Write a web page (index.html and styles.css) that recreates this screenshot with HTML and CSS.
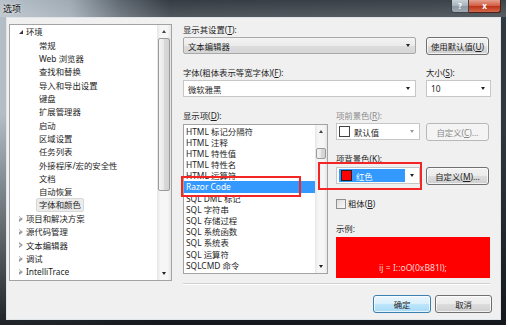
FILE: index.html
```html
<!DOCTYPE html>
<html lang="zh-CN">
<head>
    <meta charset="UTF-8">
    <link rel="stylesheet" href="styles.css">
    <title>选项</title>
</head>
<body>
<div class="window">
    <div class="titlebar">
        <span class="title">选项</span>
        <div class="caption-btns">
            <span class="cap help">?</span>
            <span class="cap close">x</span>
        </div>
    </div>

    <div class="client">
        <div class="tree">
            <ul class="tree-items">
                <li class="lvl0"><i class="caret open"></i>环境</li>
                <li class="lvl1">常规</li>
                <li class="lvl1">Web 浏览器</li>
                <li class="lvl1">查找和替换</li>
                <li class="lvl1">导入和导出设置</li>
                <li class="lvl1">键盘</li>
                <li class="lvl1">扩展管理器</li>
                <li class="lvl1">启动</li>
                <li class="lvl1">区域设置</li>
                <li class="lvl1">任务列表</li>
                <li class="lvl1">外接程序/宏的安全性</li>
                <li class="lvl1">文档</li>
                <li class="lvl1">自动恢复</li>
                <li class="lvl1 sel"><span>字体和颜色</span></li>
                <li class="lvl0"><i class="caret"></i>项目和解决方案</li>
                <li class="lvl0"><i class="caret"></i>源代码管理</li>
                <li class="lvl0"><i class="caret"></i>文本编辑器</li>
                <li class="lvl0"><i class="caret"></i>调试</li>
                <li class="lvl0"><i class="caret"></i>IntelliTrace</li>
            </ul>
            <div class="vscroll">
                <span class="arrow"><i class="tri up"></i></span>
                <span class="track"><span class="thumb tree-thumb"></span></span>
                <span class="arrow"><i class="tri down"></i></span>
            </div>
        </div>

        <div class="settings">
            <div class="label">显示其设置(<u>T</u>):</div>
            <div class="row">
                <div class="combo styled w-wide"><span class="val">文本编辑器</span><span class="drop"><i class="tri down"></i></span></div>
                <div class="btn ml10">使用默认值(<u>U</u>)</div>
            </div>

            <div class="row mt12">
                <div class="label w-font">字体(粗体表示等宽字体)(<u>F</u>):</div>
                <div class="label">大小(<u>S</u>):</div>
            </div>
            <div class="row">
                <div class="combo w-wide"><span class="val">微软雅黑</span><span class="drop"><i class="tri down"></i></span></div>
                <div class="combo w-size ml10"><span class="val">10</span><span class="drop"><i class="tri down"></i></span></div>
            </div>

            <div class="row mt13">
                <div class="items-col">
                    <div class="label">显示项(<u>D</u>):</div>
                    <div class="listbox">
                        <ul class="list-items">
                            <li>HTML 标记分隔符</li>
                            <li>HTML 注释</li>
                            <li>HTML 特性值</li>
                            <li>HTML 特性名</li>
                            <li>HTML 运算符</li>
                            <li class="sel">Razor Code</li>
                            <li>SQL DML 标记</li>
                            <li>SQL 字符串</li>
                            <li>SQL 存储过程</li>
                            <li>SQL 系统函数</li>
                            <li>SQL 系统表</li>
                            <li>SQL 运算符</li>
                            <li>SQLCMD 命令</li>
                        </ul>
                        <div class="vscroll small">
                            <span class="arrow"><i class="tri up"></i></span>
                            <span class="track"><span class="thumb list-thumb"></span></span>
                            <span class="arrow"><i class="tri down"></i></span>
                        </div>
                    </div>
                </div>

                <div class="color-col">
                    <div class="label dim">项前景色(<u>R</u>):</div>
                    <div class="row">
                        <div class="combo color disabled"><span class="swatch white"></span><span class="val">默认值</span><span class="drop"><i class="tri down"></i></span></div>
                        <div class="btn disabled ml6">自定义(<u>C</u>)...</div>
                    </div>
                    <div class="label mt-bg">项背景色(<u>K</u>):</div>
                    <div class="row">
                        <div class="combo color"><span class="picked"><span class="swatch red"></span><span class="val">红色</span></span><span class="drop"><i class="tri down"></i></span></div>
                        <div class="btn ml6">自定义(<u>M</u>)...</div>
                    </div>
                    <div class="check-row">
                        <span class="checkbox"></span>粗体(<u>B</u>)
                    </div>
                    <div class="label mt-sample">示例:</div>
                    <div class="sample">ij = I::oO(0xB81l);</div>
                </div>
            </div>

            <div class="separator"></div>

            <div class="row buttons">
                <div class="btn default">确定</div>
                <div class="btn ml4 w-cancel">取消</div>
            </div>
        </div>
    </div>

    <div class="mark mark-item"></div>
    <div class="mark mark-color"></div>
</div>
</body>
</html>
```

FILE: styles.css
```css
* {
    box-sizing: border-box;
}
body {
    margin: 0;
    background: #fff;
    font-family: "Noto Sans", "Noto Sans CJK SC", sans-serif;
    font-size: 8.4px;
    color: #1e1e1e;
}
ul {
    list-style: none;
    margin: 0;
    padding: 0;
}
u {
    text-decoration: underline;
}

/* window frame */
.window {
    position: relative;
    width: 506px;
    height: 325px;
    display: flex;
    flex-direction: column;
    background:
        linear-gradient(to bottom, rgba(20,25,30,0) 0, rgba(20,25,30,0) 35%, rgba(18,22,26,.92) 100%),
        linear-gradient(to right, #b4bec6 0, #9aa6b0 70px, #56606a 120px, #2a3239 170px, #323a41 100%);
}
.titlebar {
    height: 17px;
    display: flex;
    align-items: flex-start;
    background: linear-gradient(to bottom, rgba(255,255,255,.05), rgba(255,255,255,.18));
}
.title {
    padding: 3px 0 0 3px;
    font-size: 9px;
    line-height: 11px;
    color: #111;
    text-shadow: 0 0 3px rgba(255,255,255,.9);
}
.caption-btns {
    margin-left: auto;
    margin-right: 5px;
    display: flex;
}
.cap {
    height: 13px;
    display: flex;
    align-items: center;
    justify-content: center;
    color: #fff;
    font-size: 8px;
    font-weight: bold;
    line-height: 1;
}
.help {
    width: 18px;
    border: 1px solid #3c444c;
    border-top: 0;
    border-radius: 0 0 0 3px;
    background: linear-gradient(to bottom, #c9d1d8, #a5b0ba 50%, #8c98a3 50%, #9ea9b3);
}
.close {
    width: 32px;
    border: 1px solid #4b2019;
    border-top: 0;
    border-left: 0;
    border-radius: 0 0 3px 0;
    background: linear-gradient(to bottom, #e6a08f, #cf5a3f 50%, #bb3015 50%, #d2684c);
}

.client {
    flex: 1;
    margin: 0 5px 5px 6px;
    padding: 6px 8px 0 2px;
    background: #f0f0f0;
    border: 1px solid #dfe4e8;
    display: flex;
    align-items: flex-start;
}

/* tree */
.tree {
    width: 163px;
    height: 257px;
    border: 1px solid #a3a3a3;
    background: #fff;
    display: flex;
}
.tree-items {
    flex: 1;
    padding-top: 0.3px;
}
.tree-items li {
    height: 13.35px;
    line-height: 13.35px;
    white-space: nowrap;
    display: flex;
    align-items: center;
}
.lvl0 {
    padding-left: 8.5px;
}
.lvl1 {
    padding-left: 29px;
}
.tree-items .sel span {
    margin-left: -3px;
    padding: 0 2px;
    line-height: 12px;
    background: #ececec;
    border: 1px solid #d8d8d8;
    border-radius: 2px;
}
.caret {
    width: 4px;
    height: 6px;
    margin-right: 3.5px;
    position: relative;
}
.caret::before {
    content: "";
    position: absolute;
    left: 0;
    top: 0;
    border-top: 3px solid transparent;
    border-bottom: 3px solid transparent;
    border-left: 4px solid #9b9b9b;
}
.caret::after {
    content: "";
    position: absolute;
    left: 0.7px;
    top: 1.2px;
    border-top: 1.8px solid transparent;
    border-bottom: 1.8px solid transparent;
    border-left: 2.4px solid #fff;
}
.caret.open::before {
    top: 1px;
    border: 0;
    border-bottom: 4px solid #333;
    border-left: 4px solid transparent;
}
.caret.open::after {
    display: none;
}

/* scrollbars */
.vscroll {
    width: 14px;
    display: flex;
    flex-direction: column;
    background: linear-gradient(to right, #e6e6e6, #f6f6f6 25%, #f6f6f6 75%, #e6e6e6);
}
.vscroll.small {
    width: 12px;
}
.arrow {
    height: 13px;
    display: flex;
    align-items: center;
    justify-content: center;
}
.track {
    flex: 1;
    display: flex;
    flex-direction: column;
}
.thumb {
    margin: 0 1px;
    border: 1px solid #9a9a9a;
    border-radius: 2px;
    background: linear-gradient(to right, #f4f4f4, #e8e8e8 50%, #d9d9d9 50%, #d2d2d2);
}
.tree-thumb {
    height: 153px;
}
.list-thumb {
    margin-top: 10px;
    height: 11px;
}
.tri {
    width: 0;
    height: 0;
    border-left: 2.5px solid transparent;
    border-right: 2.5px solid transparent;
}
.tri.up {
    border-bottom: 3px solid #444;
}
.tri.down {
    border-top: 3px solid #222;
}

/* right side */
.settings {
    width: 309px;
    margin-left: 11px;
}
.label {
    height: 11px;
    line-height: 11px;
    margin-bottom: 2px;
    white-space: nowrap;
}
.label.dim {
    color: #8b8b8b;
}
.row {
    display: flex;
    align-items: flex-start;
}
.mt12 {
    margin-top: 12px;
}
.mt13 {
    margin-top: 13px;
}
.ml4 {
    margin-left: 4px;
}
.ml6 {
    margin-left: 6px;
}
.ml10 {
    margin-left: 10px;
}
.w-font {
    width: 243px;
}

.combo {
    height: 17px;
    border: 1px solid #c7c7c7;
    background: #fff;
    display: flex;
    align-items: center;
    padding-left: 4px;
    white-space: nowrap;
}
.combo .val {
    flex: 1;
}
.combo .drop {
    width: 14px;
    display: flex;
    justify-content: center;
}
.combo.styled {
    border: 1px solid #a9a9a9;
    border-radius: 2px;
    background: linear-gradient(to bottom, #f3f3f3, #ebebeb 50%, #dddddd 50%, #d6d6d6);
}
.w-wide {
    width: 233px;
}
.w-size {
    width: 65px;
}

.btn {
    width: 63px;
    height: 18px;
    border: 1px solid #707070;
    border-radius: 3px;
    display: flex;
    align-items: center;
    justify-content: center;
    white-space: nowrap;
    background: linear-gradient(to bottom, #f2f2f2, #ebebeb 50%, #dddddd 50%, #cfcfcf);
    box-shadow: inset 0 0 0 1px rgba(255,255,255,.7);
}
.btn.disabled {
    color: #8a8a8a;
    border-color: #b5b9bc;
    background: #f4f4f4;
    box-shadow: none;
}
.btn.default {
    width: 58px;
    border-color: #3c7fb1;
    background: linear-gradient(to bottom, #eaf6fd, #d9f0fc 50%, #bee6fd 50%, #a7d9f5);
}
.w-cancel {
    width: 57px;
}

.items-col {
    width: 145px;
}
.items-col .label {
    margin-bottom: 3px;
}
.listbox {
    height: 150px;
    border: 1px solid #a3a3a3;
    background: #fff;
    display: flex;
}
.list-items {
    flex: 1;
    padding-top: 0.5px;
}
.list-items li {
    height: 11.2px;
    line-height: 11.2px;
    padding-left: 2px;
    white-space: nowrap;
}
.list-items li.sel {
    background: #3399ff;
    color: #fff;
}

.color-col {
    width: 156px;
    margin-left: 8px;
}
.combo.color {
    width: 84px;
    padding-left: 2px;
}
.combo.disabled .drop .tri {
    border-top-color: #9a9a9a;
}
.swatch {
    width: 11px;
    height: 11px;
    margin-right: 4px;
    border: 1px solid #444;
}
.swatch.white {
    background: #fff;
}
.swatch.red {
    background: #ff0000;
    border-color: #222;
    margin-left: 2px;
}
.picked {
    flex: 1;
    height: 13px;
    background: #3399ff;
    color: #fff;
    display: flex;
    align-items: center;
}
.picked .val {
    flex: 1;
}
.mt-bg {
    margin-top: 12px;
    margin-bottom: 3px;
}
.check-row {
    margin-top: 13px;
    height: 11px;
    line-height: 11px;
    display: flex;
    align-items: center;
}
.checkbox {
    width: 10px;
    height: 10px;
    margin-right: 2px;
    border: 1px solid #8f8f8f;
    background: linear-gradient(135deg, #dcdcdc, #fafafa);
}
.mt-sample {
    margin-top: 13.5px;
    margin-bottom: 3.5px;
}
.sample {
    width: 154px;
    height: 41px;
    padding-top: 20px;
    background: #ff0000;
    color: #ffd2d2;
    font-size: 8.6px;
    display: flex;
    align-items: center;
    justify-content: center;
}

.separator {
    width: 307px;
    margin-top: 5px;
    border-top: 1px solid #d2d2d2;
    border-bottom: 1px solid #fff;
}
.buttons {
    margin-top: 10px;
    justify-content: flex-end;
}

/* red annotation boxes drawn over the dialog */
.mark {
    position: absolute;
    border: 2px solid #f32525;
}
.mark-item {
    left: 181px;
    top: 176px;
    width: 120px;
    height: 21px;
}
.mark-color {
    left: 318px;
    top: 162px;
    width: 104px;
    height: 28px;
}
```
